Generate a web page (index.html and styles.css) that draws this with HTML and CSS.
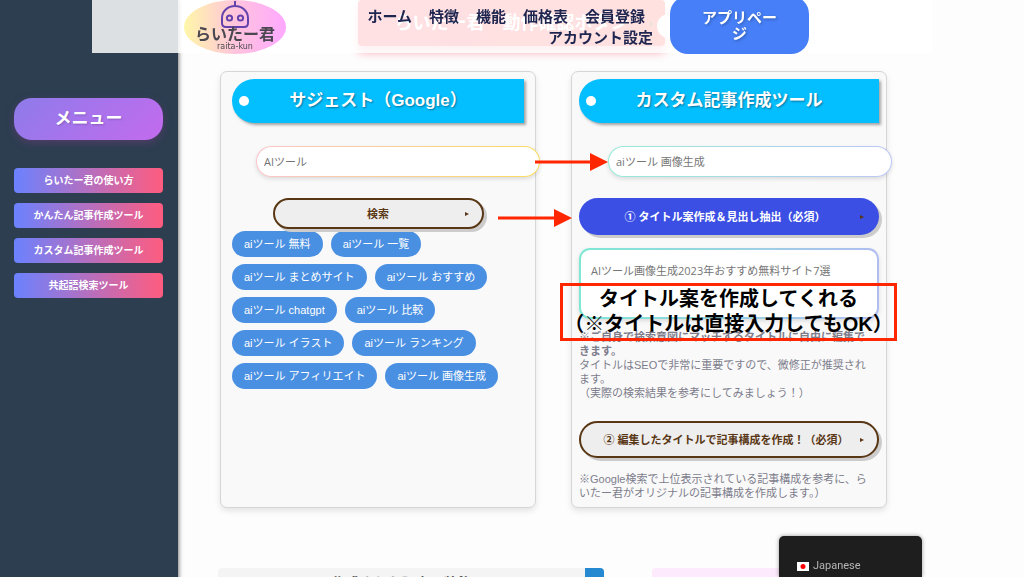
FILE: index.html
```html
<!DOCTYPE html>
<html lang="ja">
<head>
<meta charset="utf-8">
<meta name="viewport" content="width=device-width, initial-scale=1">
<title>らいたー君</title>
<link rel="stylesheet" href="styles.css">
</head>
<body>
<header class="site-header">
  <a class="logo" href="#">
    <svg class="logo-robot" viewBox="0 0 28 28" aria-hidden="true">
      <path d="M14 1v5M5 27q-4 0-4-4v-5a13 12 0 0 1 26 0v5q0 4-4 4z"/>
      <circle cx="8.500" cy="18" r="2.600"/><circle cx="19.500" cy="18" r="2.600"/>
    </svg>
    <span class="logo-name">らいたー君</span>
    <span class="logo-sub">raita-kun</span>
  </a>
  <nav class="site-nav">
    <div class="nav-row nav-row-main">
      <a href="#">ホーム</a><a href="#">特徴</a><a href="#">機能</a><a href="#">価格表</a><a href="#">会員登録</a>
    </div>
    <div class="nav-row"><a href="#">アカウント設定</a></div>
  </nav>
  <a class="app-link" href="#">アプリペー<br>ジ</a>
</header>
<div class="layout">
  <aside class="sidebar">
    <button class="menu-button" type="button">メニュー</button>
    <nav class="side-links">
      <a href="#">らいたー君の使い方</a>
      <a href="#">かんたん記事作成ツール</a>
      <a href="#">カスタム記事作成ツール</a>
      <a href="#">共起語検索ツール</a>
    </nav>
  </aside>
  <main class="main">
    <div class="banner">らいたー君　動作確認ボタン<span class="banner-arrow"></span><span class="banner-knob"></span></div>
    <div class="cards">
      <section class="card card-suggest">
        <h2 class="tag-title">サジェスト（Google）</h2>
        <input class="field field-warm" type="text" value="AIツール" aria-label="キーワード">
        <button class="pill-button search-button" type="button">検索<span class="caret"></span></button>
        <div class="chips">
          <button type="button">aiツール 無料</button>
          <button type="button">aiツール 一覧</button>
          <button type="button">aiツール まとめサイト</button>
          <button type="button">aiツール おすすめ</button>
          <button type="button">aiツール chatgpt</button>
          <button type="button">aiツール 比較</button>
          <button type="button">aiツール イラスト</button>
          <button type="button">aiツール ランキング</button>
          <button type="button">aiツール アフィリエイト</button>
          <button type="button">aiツール 画像生成</button>
        </div>
      </section>
      <section class="card card-custom">
        <h2 class="tag-title">カスタム記事作成ツール</h2>
        <input class="field field-cool" type="text" value="aiツール 画像生成" aria-label="検索キーワード">
        <button class="pill-button primary" type="button">① タイトル案作成＆見出し抽出（必須）<span class="caret"></span></button>
        <textarea class="title-box" aria-label="タイトル案">AIツール画像生成2023年おすすめ無料サイト7選</textarea>
        <p class="note"><strong>※ご自身で検索意図にマッチするタイトルに自由に編集で<br>きます。</strong><br>タイトルはSEOで非常に重要ですので、微修正が推奨され<br>ます。<br>（実際の検索結果を参考にしてみましょう！）</p>
        <button class="pill-button outline-button" type="button">② 編集したタイトルで記事構成を作成！（必須）<span class="caret"></span></button>
        <p class="note">※Google検索で上位表示されている記事構成を参考に、ら<br>いたー君がオリジナルの記事構成を作成します。）</p>
        <div class="callout">タイトル案を作成してくれる<br>（※タイトルは直接入力してもOK）</div>
      </section>
      <svg class="arrows" viewBox="0 0 110 74" aria-hidden="true">
        <path class="arrow-line" d="M37 10H93M0 66H57"/>
        <path class="arrow-head" d="M92 1l18 9-18 9zM56 57l18 9-18 9z"/>
      </svg>
    </div>
    <div class="panels">
      <section class="panel panel-result"><h3>作成された記事の装飾</h3></section>
      <section class="panel panel-pink"></section>
    </div>
  </main>
</div>
<button class="language" type="button">
  <svg viewBox="0 0 12 9" aria-hidden="true"><rect width="12" height="9" fill="#fff"/><circle cx="6" cy="4.500" r="2.500" fill="#f00"/></svg>
  Japanese
</button>
</body>
</html>
```
FILE: styles.css
```css
* { box-sizing: border-box; }
body {
  margin: 0;
  height: 100vh;
  overflow: hidden;
  background: #fdfdfd;
  color: #7d7d8c;
  font: 11px/14px "Liberation Sans", "Noto Sans CJK JP", sans-serif;
}
a { color: inherit; text-decoration: none; }
button, input, textarea { font: inherit; }
button { cursor: pointer; }
h2, h3, p { margin: 0; }

.site-header {
  position: fixed;
  z-index: 2;
  top: 0;
  left: 92px;
  right: 92px;
  height: 53px;
  display: flex;
  align-items: center;
  background: rgba(255, 255, 255, .84);
}
.logo {
  width: 102px;
  height: 54px;
  margin-left: 92px;
  border-radius: 50%;
  background: linear-gradient(90deg, #fff7a8, #ffc4dc 50%, #ffa8ff);
  color: #4b4750;
  display: flex;
  flex-direction: column;
  align-items: center;
}
.logo-robot {
  width: 28px;
  height: 28px;
  flex: none;
  fill: none;
  stroke: #6243ad;
  stroke-width: 2;
}
.logo-name { font-size: 16px; line-height: 14px; font-weight: 700; }
.logo-sub { font: 8px/10px "DejaVu Sans", sans-serif; }
.site-nav {
  flex: 1;
  margin-right: 17px;
  color: #1e2650;
  font-size: 15px;
  line-height: 21px;
  font-weight: 700;
}
.nav-row { display: flex; justify-content: flex-end; gap: 17px; }
.nav-row-main { padding-right: 8px; }
.app-link {
  align-self: flex-end;
  width: 139px;
  height: 58px;
  margin: 0 123px -1px 0;
  padding: 14px 0;
  border-radius: 18px;
  background: #467ff7;
  color: #fff;
  font-size: 15px;
  line-height: 16px;
  font-weight: 700;
  text-align: center;
  text-shadow: 1px 1px 3px rgba(0, 0, 0, .3);
}

.layout { display: flex; min-height: 100vh; }
.sidebar {
  width: 178px;
  flex: none;
  padding: 98px 15px 0 14px;
  background: #2c3e50;
  box-shadow: 1px 0 4px rgba(0, 0, 0, .5);
}
.menu-button {
  width: 100%;
  height: 42px;
  border: 0;
  border-radius: 18px;
  background: linear-gradient(135deg, #8e7bea, #c36bee);
  box-shadow: 0 3px 8px rgba(150, 60, 150, .35);
  color: #fff;
  font-size: 17px;
  font-weight: 700;
  text-shadow: 1px 1px 2px rgba(0, 0, 0, .2);
}
.side-links { display: grid; gap: 10px; margin-top: 28px; }
.side-links a {
  border-radius: 4px;
  background: linear-gradient(90deg, #6b82ff, #ff5c7f);
  color: #fff;
  font-size: 10px;
  line-height: 25px;
  font-weight: 700;
  text-align: center;
}

.main { flex: 1; min-width: 0; padding: 0 137px 0 42px; }
.banner {
  position: relative;
  height: 46px;
  margin: 0 222px 25px 138px;
  border-radius: 4px;
  background: linear-gradient(90deg, #ff3f55, #ff4a40);
  box-shadow: 0 6px 10px rgba(255, 50, 80, .45);
  color: #fff;
  font-size: 18px;
  line-height: 46px;
  font-weight: 700;
  text-align: center;
  white-space: nowrap;
}
.banner-knob {
  position: absolute;
  right: -16px;
  top: 14px;
  width: 24px;
  height: 24px;
  border-radius: 50%;
  background: #fff;
}
.banner-arrow {
  position: absolute;
  right: 12px;
  top: 21px;
  border: 3px solid transparent;
  border-left-color: #642;
  border-right: 0;
}

.cards {
  position: relative;
  display: grid;
  grid-template-columns: 1fr 1fr;
  gap: 35px;
}
.card {
  position: relative;
  min-width: 0;
  padding: 7px;
  border: 1px solid #d6d6d6;
  border-radius: 7px;
  background: #f9f9f9;
  box-shadow: 0 3px 6px rgba(0, 0, 0, .1);
}
.card-suggest { padding: 7px 11px; }
.tag-title {
  position: relative;
  height: 44px;
  border-radius: 22px 0 0 22px;
  background: #04bfff;
  box-shadow: 2px 2px 3px rgba(0, 0, 0, .35);
  color: #fff;
  font-size: 17px;
  line-height: 43px;
  font-weight: 700;
  text-align: center;
  text-shadow: 1px 1px 2px rgba(0, 0, 0, .4);
}
.tag-title::before {
  content: "";
  position: absolute;
  left: 7px;
  top: 17px;
  width: 10px;
  height: 10px;
  border-radius: 50%;
  background: #fff;
}
.field {
  display: block;
  height: 31px;
  padding: 0 7px 2px;
  border: 1px solid transparent;
  border-radius: 16px;
  box-shadow: 0 2px 4px rgba(0, 0, 0, .12);
  color: #757575;
  font-family: "Open Sans", "Noto Sans CJK JP", sans-serif;
}
.field-warm {
  width: calc(100% - 8px);
  margin: 23px 0 21px 24px;
  background: linear-gradient(#fff, #fff) padding-box, linear-gradient(90deg, #fbc4cb, #fbdc60) border-box;
}
.field-cool {
  width: calc(100% - 16px);
  margin: 23px 0 21px 29px;
  background: linear-gradient(#fff, #fff) padding-box, linear-gradient(90deg, #96ecd8, #bcc7f5) border-box;
}
.pill-button {
  position: relative;
  display: block;
  width: 100%;
  height: 37px;
  padding: 0 12px;
  border: 2px solid #593715;
  border-radius: 19px;
  background: #eee;
  box-shadow: 3px 3px 0 #ccc;
  color: #593715;
  font-weight: 700;
  white-space: nowrap;
}
.caret {
  position: absolute;
  right: 13px;
  top: 50%;
  margin-top: -2px;
  border: 2px solid transparent;
  border-left: 4px solid #59351a;
  border-right: 0;
}
.search-button { width: 211px; height: 31px; margin: 0 auto; }
.primary { padding-right: 20px; border: 0; background: #3b4fe4; color: #fff; }
.primary .caret { right: 15px; }
.chips { display: flex; flex-wrap: wrap; gap: 7px 8px; margin: 2px -1px 0 0; }
.chips button {
  height: 26px;
  padding: 0 12px;
  border: 0;
  border-radius: 13px;
  background: #4a90e2;
  color: #fff;
}
.title-box {
  display: block;
  width: 100%;
  height: 71px;
  margin: 13px 0 11px;
  padding: 14px 10px;
  border: 2px solid transparent;
  border-radius: 11px;
  background: linear-gradient(#fff, #fff) padding-box, linear-gradient(90deg, #7ee8d4, #b0bdf0) border-box;
  box-shadow: 0 2px 4px rgba(0, 0, 0, .12);
  color: #757575;
  font-family: "Open Sans", "Noto Sans CJK JP", sans-serif;
  overflow: hidden;
  resize: none;
}
.note { white-space: nowrap; }
.outline-button { margin: 21px 0 14px; padding-right: 18px; }
.callout {
  position: absolute;
  top: 211px;
  left: -12px;
  right: -11px;
  padding: 1px 0;
  border: 3px solid #ff2600;
  color: #000;
  font-size: 20px;
  line-height: 25px;
  font-weight: 700;
  font-feature-settings: "halt";
  text-align: center;
  white-space: nowrap;
}
.arrows {
  position: absolute;
  top: 81px;
  left: calc(50% - 56px);
  width: 110px;
  height: 74px;
  overflow: visible;
}
.arrow-line { stroke: #ff2600; stroke-width: 3; }
.arrow-head { fill: #ff2600; }

.panels {
  display: grid;
  grid-template-columns: 386fr 253fr;
  gap: 48px;
  margin: 60px -18px 0 -2px;
}
.panel { height: 60px; border-radius: 4px; }
.panel-result {
  border-right: 19px solid #2489d0;
  background: #f4f4f4;
  color: #555;
}
.panel h3 { padding-top: 6px; font-size: 14px; line-height: 18px; text-align: center; }
.panel-pink { background: #fdebfd; }

.language {
  position: fixed;
  z-index: 3;
  right: 102px;
  bottom: 0;
  width: 143px;
  height: 41px;
  padding: 19px 18px 0;
  border: 0;
  border-radius: 5px 5px 0 0;
  background: #1e1e1e;
  box-shadow: 0 0 4px rgba(0, 0, 0, .4);
  color: #b5b5b5;
  font: 11px/20px Roboto, sans-serif;
  display: flex;
  align-items: center;
  gap: 4px;
}
.language svg { width: 12px; height: 9px; }
```
